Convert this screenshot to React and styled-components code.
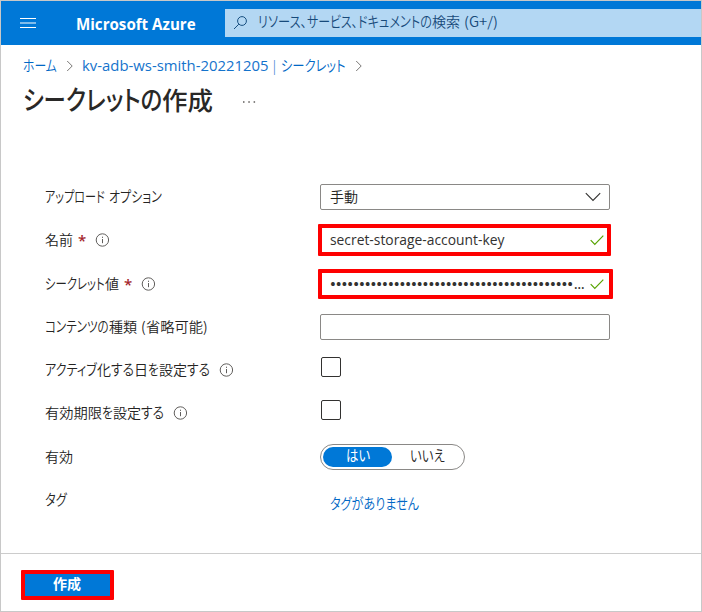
import React, { useLayoutEffect, useRef, useState } from "react";
import styled, { createGlobalStyle } from "styled-components";

const GlobalStyle = createGlobalStyle`
  * { box-sizing: border-box; }
  body { margin: 0; background: #fff; }
`;

const Page = styled.div`
  width: 702px;
  height: 612px;
  border: 1px solid #c8c8c8;
  background: #fff;
  display: flex;
  flex-direction: column;
  overflow: hidden;
  color: #252423;
  font: 400 14px/20px "Noto Sans", "Noto Sans CJK JP", sans-serif;
`;

/* Japanese UI text with condensed kana: every run is fitted to its own width. */
const Line = styled.span`
  display: inline-flex;
  flex: none;
  height: ${(p) => p.$height || 20}px;
  line-height: ${(p) => p.$height || 20}px;
  font-size: ${(p) => p.$size || 14}px;
  font-weight: ${(p) => p.$weight || 350};
  font-family: ${(p) => p.$family || '"Noto Sans CJK JP"'}, sans-serif;
  color: ${(p) => p.$color || "inherit"};
  white-space: pre;
`;
const RunBox = styled.span`
  display: block;
  flex: none;
  width: ${(p) => p.$width}px;
  margin-right: ${(p) => p.$gap}px;
`;
const RunText = styled.span`
  display: inline-block;
  transform-origin: 0 50%;
  font-size: ${(p) => (p.$kana ? "1.07em" : "1em")};
  font-feature-settings: "palt";
`;

const KANA = /^[\u3001\u3040-\u30ff]+$/;

function Run({ text, width, gap = 0 }) {
  const ref = useRef(null);
  const [scale, setScale] = useState(1);
  useLayoutEffect(() => {
    setScale(width / ref.current.offsetWidth);
  }, [text, width]);
  return (
    <RunBox $width={width} $gap={gap}>
      <RunText ref={ref} $kana={KANA.test(text)} style={{ transform: `scaleX(${scale})` }}>
        {text}
      </RunText>
    </RunBox>
  );
}

function Text({ runs, size, weight, color, height, family }) {
  return (
    <Line $size={size} $weight={weight} $color={color} $height={height} $family={family}>
      {runs.map(([text, width, gap], i) => (
        <Run key={i} text={text} width={width} gap={gap} />
      ))}
    </Line>
  );
}

const LATIN = '"Open Sans", "Noto Sans"';

const TopBar = styled.header`
  flex: none;
  height: 44px;
  padding-left: 19px;
  background: #0078d7;
  display: flex;
  align-items: center;
`;
const Brand = styled.div`
  display: flex;
  margin-left: 40px;
  padding-top: 1px;
  width: 149px;
`;
const SearchBox = styled.div`
  flex: 1;
  height: 28px;
  padding: 0 0 5px 8px;
  background: #b3d7f3;
  display: flex;
  align-items: center;
  gap: 10px;
`;
const SearchIconSlot = styled.span`
  margin-top: 4px;
`;
const Icon = styled.svg`
  display: block;
  flex: none;
  fill: none;
`;

const Breadcrumb = styled.nav`
  display: flex;
  align-items: center;
  height: 20px;
  margin: 10px 0 0 22px;
`;
const Crumb = styled.span`
  display: flex;
  margin-right: ${(p) => p.$gap}px;
  padding-top: ${(p) => p.$drop || 0}px;
`;
const TitleRow = styled.div`
  display: flex;
  align-items: center;
  height: 36px;
  margin: 6px 0 0 22px;
  gap: 29px;
`;
const MoreSlot = styled.span`
  margin-top: 5px;
`;

const Form = styled.main`
  margin: 58px 0 0 44px;
  flex: 1;
`;
const Row = styled.div`
  display: grid;
  grid-template-columns: 273px 1fr;
  height: ${(p) => p.$height || 43}px;
`;
const Label = styled.div`
  display: flex;
  align-items: center;
  height: 41px;
`;
const Star = styled.span`
  width: 8px;
  margin: 2px 0 0 5px;
  color: #a4262c;
  font: 600 15px/20px "Open Sans", sans-serif;
`;
const InfoSlot = styled.span`
  margin: 3px 0 0 ${(p) => p.$gap}px;
`;
const Field = styled.div`
  margin: 9px 0 0 2px;
  width: 290px;
  height: 26px;
  padding: 0 8px 0 9px;
  border: 1px solid #8a8886;
  border-radius: 2px;
  display: flex;
  align-items: center;
  justify-content: space-between;

  > ${Line} {
    margin-bottom: 2px;
  }
`;
const Highlighted = styled.div`
  margin-top: ${(p) => p.$top}px;
  width: ${(p) => p.$width}px;
  height: ${(p) => p.$height}px;
  padding: 0 ${(p) => p.$right}px ${(p) => p.$bottom || 0}px 8px;
  border: 4px solid #fe0000;
  border-radius: 1px;
  display: flex;
  align-items: center;
  justify-content: space-between;
`;
const Checkbox = styled.div`
  margin: 9px 0 0 3px;
  width: 20px;
  height: 20px;
  border: 1px solid #323130;
  border-radius: 2px;
`;
const Toggle = styled.div`
  margin: 9px 0 0 2px;
  width: 145px;
  height: 26px;
  padding: 2px;
  border: 1px solid #8a8886;
  border-radius: 13px;
  display: flex;
`;
const Option = styled.div`
  width: ${(p) => (p.$on ? 69 : 70)}px;
  height: 20px;
  padding-bottom: 4px;
  border-radius: 10px;
  background: ${(p) => (p.$on ? "#0078d7" : "transparent")};
  color: ${(p) => (p.$on ? "#fff" : "inherit")};
  display: flex;
  align-items: center;
  justify-content: center;
`;
const TagValue = styled.div`
  margin: 15px 0 0 12px;
`;

const Footer = styled.footer`
  flex: none;
  height: 58px;
  border-top: 1px solid #cccccc;
  padding: 16px 0 0 20px;
`;
const CreateButton = styled.button`
  display: flex;
  align-items: center;
  justify-content: center;
  width: 93px;
  height: 30px;
  padding: 0 1px 5px 0;
  border: 4px solid #fe0000;
  border-radius: 1px;
  background: #0078d7;
  color: #fff;
`;

const Info = ({ gap }) => (
  <InfoSlot $gap={gap}>
    <Icon width="14" height="14" viewBox="0 0 14 14">
      <circle cx="7.4" cy="7" r="6.2" stroke="#605e5c" />
      <path d="M7.5 6v4.2M7.5 3.7v1.2" stroke="#605e5c" />
    </Icon>
  </InfoSlot>
);
const Check = () => (
  <Icon width="14" height="12" viewBox="0 0 14 12">
    <path d="M.7 6.2 4.8 10.3 13.3 1.7" stroke="#57a300" strokeWidth="1.2" />
  </Icon>
);
const Separator = () => (
  <Icon width="8" height="12" viewBox="0 0 8 12">
    <path d="M1.2 1 6.2 6 1.2 11" stroke="#7a7876" />
  </Icon>
);

export default function App() {
  return (
    <>
      <GlobalStyle />
      <Page>
        <TopBar>
          <Icon width="16" height="12" viewBox="0 0 16 12">
            <path d="M0 1.5h16M0 10.5h16" stroke="#fff" />
            <path d="M0 6h16" stroke="#80bceb" strokeWidth="2" />
          </Icon>
          <Brand>
            <Text family={LATIN} size={16} weight={700} color="#fff" runs={[["Microsoft Azure", 120]]} />
          </Brand>
          <SearchBox>
            <SearchIconSlot>
              <Icon width="15" height="15" viewBox="0 0 15 15">
                <circle cx="9" cy="6" r="4.4" stroke="#174f80" />
                <path d="M5.8 9.2 1 14" stroke="#174f80" />
              </Icon>
            </SearchIconSlot>
            <Text color="#174a7a" runs={[
              ["リソース、", 49], ["サービス、", 51], ["ドキュメントの", 74], ["検索", 28, 4], ["(G+/)", 34],
            ]} />
          </SearchBox>
        </TopBar>

        <Breadcrumb>
          <Crumb $gap={9}><Text color="#0067c5" runs={[["ホーム", 34]]} /></Crumb>
          <Crumb $gap={8} $drop={1}><Separator /></Crumb>
          <Crumb $gap={4} $drop={2}>
            <Text family={LATIN} weight={400} color="#1473cc" runs={[["kv-adb-ws-smith-20221205", 187, 3], ["|", 5]]} />
          </Crumb>
          <Crumb $gap={9}><Text color="#0067c5" runs={[["シークレット", 65]]} /></Crumb>
          <Crumb $gap={0} $drop={1}><Separator /></Crumb>
        </Breadcrumb>

        <TitleRow>
          <Text size={25} weight={500} height={36} color="#292827" runs={[["シークレットの", 139], ["作成", 51]]} />
          <MoreSlot>
            <Icon width="14" height="4" viewBox="0 0 14 4">
              <path d="M1 2h1.5M6.3 2h1.5M11.6 2h1.5" stroke="#605e5c" strokeWidth="1.5" />
            </Icon>
          </MoreSlot>
        </TitleRow>

        <Form>
          <Row>
            <Label><Text runs={[["アップロード", 60, 4], ["オプション", 53]]} /></Label>
            <Field>
              <Text runs={[["手動", 28]]} />
              <Icon width="16" height="10" viewBox="0 0 16 10">
                <path d="M.8 1.2 8 8.4 15.2 1.2" stroke="#323130" strokeWidth="1.1" />
              </Icon>
            </Field>
          </Row>
          <Row $height={44}>
            <Label>
              <Text runs={[["名前", 28]]} /><Star>*</Star><Info gap={9} />
            </Label>
            <Highlighted $top={6} $width={293} $height={32} $right={3} $bottom={1}>
              <Text family={LATIN} weight={400} color="#323130" runs={[["secret-storage-account-key", 174]]} />
              <Check />
            </Highlighted>
          </Row>
          <Row>
            <Label>
              <Text runs={[["シークレット", 60], ["値", 14]]} /><Star>*</Star><Info gap={9} />
            </Label>
            <Highlighted $top={7} $width={295} $height={30} $right={5}>
              <Text family={LATIN} weight={600} color="#323130" runs={[["•".repeat(42), 243, 1], ["...", 11]]} />
              <Check />
            </Highlighted>
          </Row>
          <Row>
            <Label>
              <Text runs={[["コンテンツの", 64], ["種類", 28, 4], ["(", 5], ["省略可能", 57], [")", 5]]} />
            </Label>
            <Field />
          </Row>
          <Row>
            <Label>
              <Text runs={[["アクティブ", 52], ["化", 14], ["する", 23], ["日", 14], ["を", 11], ["設定", 28], ["する", 23]]} />
              <Info gap={9} />
            </Label>
            <Checkbox />
          </Row>
          <Row $height={44}>
            <Label>
              <Text runs={[["有効期限", 57], ["を", 11], ["設定", 28], ["する", 23]]} />
              <Info gap={9} />
            </Label>
            <Checkbox />
          </Row>
          <Row>
            <Label><Text runs={[["有効", 28]]} /></Label>
            <Toggle>
              <Option $on><Text weight={400} runs={[["はい", 24]]} /></Option>
              <Option><Text runs={[["いいえ", 35]]} /></Option>
            </Toggle>
          </Row>
          <Row>
            <Label><Text runs={[["タグ", 22]]} /></Label>
            <TagValue><Text color="#0067c5" runs={[["タグがありません", 89]]} /></TagValue>
          </Row>
        </Form>

        <Footer>
          <CreateButton><Text weight={700} runs={[["作成", 28]]} /></CreateButton>
        </Footer>
      </Page>
    </>
  );
}
